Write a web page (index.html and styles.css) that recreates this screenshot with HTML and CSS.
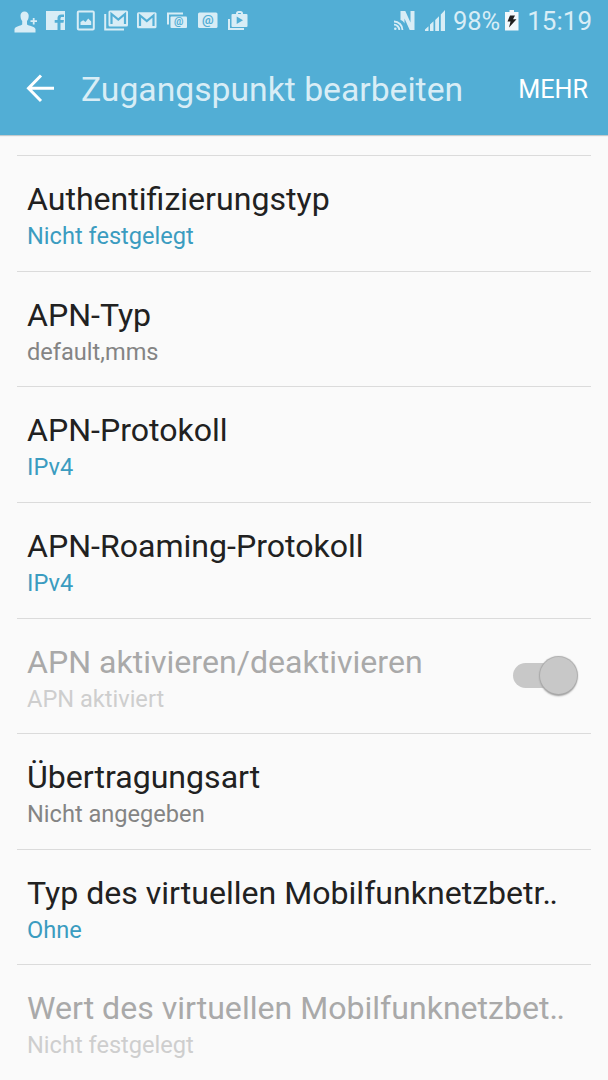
FILE: index.html
```html
<!DOCTYPE html>
<html lang="de">
<head>
<meta charset="utf-8">
<title>Zugangspunkt bearbeiten</title>
<link rel="stylesheet" href="styles.css">
</head>
<body>
<header class="top">
  <div class="status">
    <div class="notifications">
      <svg width="22" height="22" viewBox="0 0 22 22"><path d="M10.500 1.500C8 1.500 6.500 3.200 6.500 5.500c0 2.500.6 4.200 1.700 5.500v3.500C6.500 16 1.500 16 .5 19V22.500H21.500V19C20.500 16 14.800 16 13 14.500V11c1.200-1.300 1.700-3 1.700-5.500C14.700 3.200 13 1.500 10.500 1.500zM18.800 8h1.800v2.300H23v1.800h-2.400v2.400h-1.800v-2.400h-2.300v-1.800h2.300z"/></svg>
      <svg width="20" height="22" viewBox="0 0 20 22"><path d="M0 1h19v19h-4.500V12.800h3l.4-2.700h-3.400V8.500c0-.9.400-1.500 1.500-1.500h2V4.400h-2.500c-2.800 0-4 1.500-4 3.700v2H8.700v2.700h2.800V20H0z"/></svg>
      <svg width="20" height="22" viewBox="0 0 20 22"><rect class="line" x="1.800" y="1.500" width="16" height="18" rx="1"/><path d="M4.500 15v-3l2.700-1.700 2.300 1.700 2.700-3.500 3 3V15z"/></svg>
      <svg class="near2" width="25" height="22" viewBox="0 0 25 22"><path class="line" d="M1.200 4v15.500H20"/><rect x="4.500" y=".5" width="19.500" height="16" rx="1.500"/><path class="letter" d="M7.500 14V4l6.800 5.500 6.700-5.500v10"/></svg>
      <svg class="near2" width="21" height="22" viewBox="0 0 21 22"><rect y="2.200" width="19.500" height="16" rx="1.500"/><path class="letter" d="M3 16V5.500l6.800 5.500 6.700-5.500V16"/></svg>
      <svg class="near1" width="21" height="22" viewBox="0 0 21 22"><path class="line" d="M1 14.500V3.500H16"/><rect x="3.500" y="6.500" width="16.500" height="11.500" rx="1"/><text class="at at-small" x="11.700" y="15">@</text></svg>
      <svg width="21" height="22" viewBox="0 0 21 22"><rect y="2.500" width="19.500" height="15.500" rx="1.500"/><text class="at" x="9.800" y="13.700">@</text></svg>
      <svg class="near1" width="21" height="22" viewBox="0 0 21 22"><path class="line" d="M1 9v10H16"/><path class="line" d="M9 5V3.500c0-1 .5-1.500 1.500-1.500h2c1 0 1.500.5 1.500 1.500V5"/><path fill-rule="evenodd" d="M4.500 4h14a1 1 0 0 1 1 1v11a1 1 0 0 1-1 1h-14a1 1 0 0 1-1-1V5a1 1 0 0 1 1-1zM8.700 6.500v7.500l6.300-3.700z"/></svg>
    </div>
    <div class="system">
      <svg class="nfc" width="22" height="22" viewBox="0 0 22 22"><path d="M6.500 1h4.800l5.200 11.500V1h4v19h-4.800L10.500 8.500V13.500C9.500 11.500 8.500 10.500 6.500 10z"/><path class="wave" d="M0 11.500a8.500 8.500 0 0 1 8.500 8.500M0 14.700A5.300 5.300 0 0 1 5.300 20"/><circle cx="1.300" cy="18.700" r="1.300"/></svg>
      <svg class="signal" width="21" height="22" viewBox="0 0 21 22"><path d="M0 21v-1.500L3.500 16.200V21zM5 21v-6.500l3.500-3.200V21zM10.200 21V10L14 6.200V21zM15.800 21V4.500L20 0v21z"/></svg>
      <span class="percent">98%</span>
      <svg class="battery" width="14" height="21" viewBox="0 0 14 21"><path class="cell" d="M4.500 0h4.500v2h4.500v18.500H0V2h4.500z"/><path class="bolt" d="M5 5.500h5L8 9.200h3.500L4 17.500l1.500-6H2.500z"/></svg>
      <span class="clock">15:19</span>
    </div>
  </div>
  <div class="appbar">
    <svg class="back" width="28" height="28" viewBox="0 0 28 28"><path d="M15 .5L2.500 13.300 15 26M2.500 13.300H28"/></svg>
    <h1 class="title">Zugangspunkt bearbeiten</h1>
    <span class="more">MEHR</span>
  </div>
</header>
<main class="list">
  <section class="row"><div class="name">Authentifizierungstyp</div><div class="value accent">Nicht festgelegt</div></section>
  <section class="row"><div class="name">APN-Typ</div><div class="value">default,mms</div></section>
  <section class="row"><div class="name">APN-Protokoll</div><div class="value accent">IPv4</div></section>
  <section class="row"><div class="name">APN-Roaming-Protokoll</div><div class="value accent">IPv4</div></section>
  <section class="row disabled switch-row"><div><div class="name">APN aktivieren/deaktivieren</div><div class="value">APN aktiviert</div></div><div class="switch"><span class="thumb"></span></div></section>
  <section class="row"><div class="name">Übertragungsart</div><div class="value">Nicht angegeben</div></section>
  <section class="row"><div class="name">Typ des virtuellen Mobilfunknetzbet<span class="kern">r</span><span class="dots">..</span></div><div class="value accent">Ohne</div></section>
  <section class="row disabled"><div class="name">Wert des virtuellen Mobilfunknetzbet<span class="dots">..</span></div><div class="value">Nicht festgelegt</div></section>
</main>
</body>
</html>
```
FILE: styles.css
```css
* { box-sizing: border-box; }
body {
  margin: 0;
  width: 608px;
  height: 1080px;
  overflow: hidden;
  background: #fafafa;
  font-family: Roboto, "Noto Sans", sans-serif;
  white-space: nowrap;
}
svg { display: block; flex: none; overflow: visible; }
.top {
  height: 135px;
  background: #52aed5;
  box-shadow: 0 1px 1px #c4cbcd;
}
.status {
  display: flex;
  justify-content: space-between;
  height: 42px;
  padding: 0 16px 0 14px;
  color: #d8edf6;
  fill: #d8edf6;
}
.notifications { display: flex; gap: 10px; padding-top: 10px; }
.near1 { margin-left: -1px; }
.near2 { margin-left: -2px; }
.line { fill: none; stroke: #d8edf6; stroke-width: 2; }
.letter { fill: none; stroke: #52aed5; stroke-width: 2.200; }
.at { fill: #52aed5; font-size: 13px; font-weight: 700; text-anchor: middle; }
.at-small { font-size: 10.500px; }
.system { display: flex; font-size: 26px; line-height: 42px; }
.nfc { margin: 10px 9px 0 0; }
.wave { fill: none; stroke: #d8edf6; stroke-width: 1.800; }
.signal { margin: 10px 7px 0 0; }
.percent { font-size: 25.500px; }
.battery { margin: 10px 8px 0 5px; }
.cell { fill: #f2f8fb; }
.bolt { fill: #202020; }
.appbar { display: flex; align-items: center; height: 93px; padding: 0 20px 0 26px; }
.back { fill: none; stroke: #fff; stroke-width: 3; }
.title { margin: 0 auto 0 27px; padding-top: 2px; font-size: 33.700px; font-weight: 400; line-height: 40px; color: #d8edf6; }
.more { padding-top: 3px; font-size: 25.200px; line-height: 30px; color: #fff; }
.list { padding: 20px 17px 0; }
.row { height: 115.640px; padding: 24px 10px 0; border-top: 1px solid #dbdbdb; }
.name { font-size: 32.100px; line-height: 38px; color: #212121; }
.kern { letter-spacing: -2px; }
.dots { letter-spacing: -1.500px; }
.value { margin-top: 4px; font-size: 23.600px; line-height: 28px; color: #848484; }
.accent { color: #3b9cc0; }
.disabled .name { color: #a9a9a9; }
.disabled .value { color: #cecece; }
.switch-row { display: flex; justify-content: space-between; }
.switch { display: flex; justify-content: flex-end; align-items: center; width: 64px; height: 25px; margin: 20px 4px 0 0; border-radius: 13px; background: linear-gradient(90deg, #c8c8c8 50px, transparent 50px); }
.thumb { width: 37px; height: 37px; border-radius: 50%; background: #c8c8c8; box-shadow: 0 0 1px 1px #aaa, 0 2px 2px #999; }
```
